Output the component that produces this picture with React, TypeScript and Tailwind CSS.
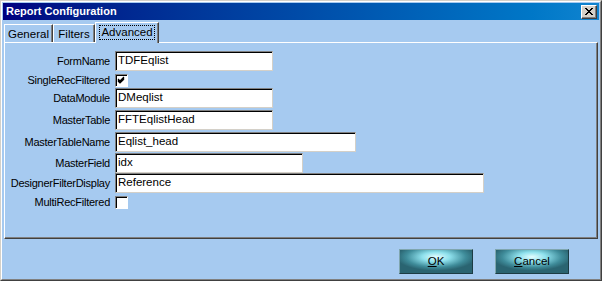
const font = { fontFamily: '"Liberation Sans", Arial, sans-serif' };

type Row =
  | { label: string; kind: 'text'; value: string; w: string; mt: string }
  | { label: string; kind: 'check'; checked: boolean; mt: string };

const rows: Row[] = [
  { label: 'FormName', kind: 'text', value: 'TDFEqlist', w: 'w-[158px]', mt: 'mt-[8px]' },
  { label: 'SingleRecFiltered', kind: 'check', checked: true, mt: 'mt-[3px]' },
  { label: 'DataModule', kind: 'text', value: 'DMeqlist', w: 'w-[158px]', mt: 'mt-[1px]' },
  { label: 'MasterTable', kind: 'text', value: 'FFTEqlistHead', w: 'w-[158px]', mt: 'mt-[2px]' },
  { label: 'MasterTableName', kind: 'text', value: 'Eqlist_head', w: 'w-[241px]', mt: 'mt-[2px]' },
  { label: 'MasterField', kind: 'text', value: 'idx', w: 'w-[188px]', mt: 'mt-[1px]' },
  { label: 'DesignerFilterDisplay', kind: 'text', value: 'Reference', w: 'w-[369px]', mt: 'mt-[0px]' },
  { label: 'MultiRecFiltered', kind: 'check', checked: false, mt: 'mt-[3px]' },
];

function Field({ row }: { row: Row }) {
  return (
    <div className={`flex items-center ${row.mt}`}>
      <div className="w-[106px] pr-[1px] text-right text-[11px] leading-none tracking-[-0.25px] text-black whitespace-nowrap">
        {row.label}
      </div>
      <div className="ml-[4px]">
        {row.kind === 'text' ? (
          <div
            className={`${row.w} h-[20px] flex items-center bg-white border border-t-[#808080] border-l-[#808080] border-r-[#d4d0c8] border-b-[#d4d0c8] shadow-[inset_1px_1px_0_#000] pl-[2px] text-[11.5px] leading-none text-black`}
          >
            {row.value}
          </div>
        ) : (
          <div className="w-[13px] h-[13px] bg-white border border-t-[#808080] border-l-[#808080] border-r-white border-b-white shadow-[inset_1px_1px_0_#000] flex items-center justify-center">
            {row.checked && (
              <svg width="9" height="9" viewBox="0 0 9 9">
                <path d="M1 3 L3 5 L7 1 M1 4 L3 6 L7 2 M1 5 L3 7 L7 3" stroke="#000" strokeWidth="1.2" fill="none" />
              </svg>
            )}
          </div>
        )}
      </div>
    </div>
  );
}

function Tab({ label, w, selected }: { label: string; w: string; selected?: boolean }) {
  if (selected) {
    return (
      <div
        className={`${w} h-[21px] -mb-px z-10 bg-[#a6caf0] border-t border-l border-r border-t-white border-l-white border-r-[#404040] shadow-[inset_-1px_0_0_#808080] flex items-start justify-center pt-[2px]`}
      >
        <span className="border border-dotted border-black px-[1px] text-[11.5px] leading-[13px] text-black">{label}</span>
      </div>
    );
  }
  return (
    <div
      className={`${w} h-[18px] bg-[#a6caf0] border-t border-l border-r border-t-white border-l-white border-r-[#404040] shadow-[inset_-1px_0_0_#808080] flex items-center justify-center pt-[3px] text-[11.5px] leading-none text-black`}
    >
      {label}
    </div>
  );
}

function Btn({ first, rest }: { first: string; rest: string }) {
  return (
    <button className="w-[74px] h-[25px] flex items-center justify-center border border-t-[#7fa6ae] border-l-[#7fa6ae] border-r-[#1c3c44] border-b-[#1c3c44] bg-[radial-gradient(ellipse_55%_60%_at_50%_30%,#e4fdff_0%,#8ee0ec_35%,#3f8c9a_75%,#2a6471_100%)] text-[11.5px] leading-none text-black">
      <span>
        <span className="underline">{first}</span>
        {rest}
      </span>
    </button>
  );
}

export default function App() {
  return (
    <div style={font} className="w-[602px] h-[281px] bg-[#a6caf0] border border-t-[#d4d0c8] border-l-[#d4d0c8] border-r-[#404040] border-b-[#404040]">
      <div className="h-full border border-t-white border-l-white border-r-[#808080] border-b-[#808080] p-[1px] flex flex-col">
        {/* title bar */}
        <div className="h-[17px] flex items-center justify-between bg-gradient-to-r from-[#000080] to-[#1084d0] pl-[3px] pr-[2px]">
          <span className="text-[11px] font-bold text-white leading-none">Report Configuration</span>
          <div className="w-[16px] h-[14px] bg-[#d4d0c8] border border-t-white border-l-white border-r-[#404040] border-b-[#404040] shadow-[inset_-1px_-1px_0_#808080] flex items-center justify-center">
            <svg width="8" height="7" viewBox="0 0 8 7" shapeRendering="crispEdges">
              <path d="M0 0h2v1h-2zM6 0h2v1h-2zM1 1h2v1h-2zM5 1h2v1h-2zM2 2h4v1h-4zM3 3h2v1h-2zM2 4h4v1h-4zM1 5h2v1h-2zM5 5h2v1h-2zM0 6h2v1h-2zM6 6h2v1h-2z" fill="#000" />
            </svg>
          </div>
        </div>

        {/* tabs */}
        <div className="mt-[2px] flex items-end pl-[1px] h-[20px]">
          <Tab label="General" w="w-[49px]" />
          <Tab label="Filters" w="w-[42px]" />
          <Tab label="Advanced" w="w-[64px]" selected />
        </div>

        {/* page */}
        <div className="mx-[1px] h-[197px] border border-t-white border-l-white border-r-[#404040] border-b-[#404040] shadow-[inset_-1px_-1px_0_#808080] flex flex-col">
          {rows.map((r) => (
            <Field key={r.label} row={r} />
          ))}
        </div>

        {/* buttons */}
        <div className="flex justify-end gap-[22px] pr-[30px] mt-[10px]">
          <Btn first="O" rest="K" />
          <Btn first="C" rest="ancel" />
        </div>
      </div>
    </div>
  );
}
